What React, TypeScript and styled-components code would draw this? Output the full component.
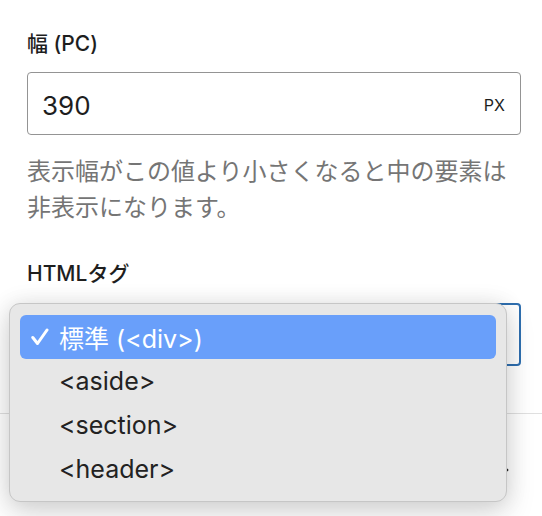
import styled, { createGlobalStyle } from "styled-components";

const GlobalStyle = createGlobalStyle`
  body {
    margin: 0;
    background: #fff;
    font-family: Inter, "Noto Sans CJK JP", sans-serif;
    color: #1e1e1e;
  }
`;

const Panel = styled.div`
  width: 542px;
  height: 516px;
  overflow: hidden;
  background: #fff;
`;

const PanelBody = styled.div`
  display: flex;
  flex-direction: column;
  padding: 29px 21px 47px 27px;
  border-bottom: 1px solid #e0e0e0;
`;

const Label = styled.label<{ $gap: number }>`
  font-size: 21px;
  font-weight: 500;
  line-height: 30px;
  margin-bottom: ${({ $gap }) => $gap}px;
`;

const InputWrap = styled.div`
  display: flex;
  align-items: center;
  height: 63px;
  box-sizing: border-box;
  border: 1px solid #949494;
  border-radius: 4px;
  padding: 0 15px 0 14px;
`;

const Value = styled.span`
  flex: 1;
  font-size: 26px;
  padding-top: 4px;
`;

const Suffix = styled.span`
  font-size: 16px;
  color: #1e1e1e;
  padding-top: 2px;
`;

const Help = styled.p`
  margin: 19px 0 33px;
  font-size: 24px;
  line-height: 36px;
  color: #757575;
`;

const SelectWrap = styled.div`
  position: relative;
`;

const SelectBox = styled.div`
  height: 63px;
  box-sizing: border-box;
  border: 2px solid #2f6fb0;
  border-radius: 4px;
`;

const Menu = styled.ul`
  position: absolute;
  top: 0;
  left: -18px;
  width: 498px;
  box-sizing: border-box;
  margin: 0;
  padding: 11px 10px 10px;
  list-style: none;
  background: #e7e7e7;
  border: 1px solid #c6c6c6;
  border-radius: 11px;
  box-shadow: 0 0 22px rgba(0, 0, 0, 0.1), 0 12px 30px rgba(0, 0, 0, 0.14);
`;

const Item = styled.li<{ $active?: boolean }>`
  display: flex;
  align-items: center;
  height: 44px;
  padding-left: 11px;
  border-radius: 6px;
  font-size: 25px;
  color: ${({ $active }) => ($active ? "#fff" : "#222")};
  background: ${({ $active }) => ($active ? "#699ffa" : "transparent")};
`;

const Check = styled.span`
  display: flex;
  width: 28px;
  flex-shrink: 0;
`;

const Header = styled.div`
  display: flex;
  align-items: center;
  justify-content: flex-end;
  height: 112px;
  padding: 0 33px 0 27px;
`;

const options = ["標準 (<div>)", "<aside>", "<section>", "<header>"];

export default function App() {
  return (
    <Panel>
      <GlobalStyle />
      <PanelBody>
        <Label $gap={13}>幅 (PC)</Label>
        <InputWrap>
          <Value>390</Value>
          <Suffix>PX</Suffix>
        </InputWrap>
        <Help>表示幅がこの値より小さくなると中の要素は非表示になります。</Help>
        <Label $gap={14}>HTMLタグ</Label>
        <SelectWrap>
          <SelectBox />
          <Menu>
            {options.map((opt, i) => (
              <Item key={opt} $active={i === 0}>
                <Check>
                  {i === 0 && (
                    <svg width="18" height="18" viewBox="0 0 18 18">
                      <polyline
                        points="1.8,9.5 6.5,15.5 16,2"
                        fill="none"
                        stroke="#fff"
                        strokeWidth="3"
                        strokeLinecap="round"
                        strokeLinejoin="round"
                      />
                    </svg>
                  )}
                </Check>
                {opt}
              </Item>
            ))}
          </Menu>
        </SelectWrap>
      </PanelBody>
      <Header>
        <svg width="10" height="16" viewBox="0 0 10 16">
          <polyline points="2,2 8,8 2,14" fill="none" stroke="#1e1e1e" strokeWidth="2.4" />
        </svg>
      </Header>
    </Panel>
  );
}
